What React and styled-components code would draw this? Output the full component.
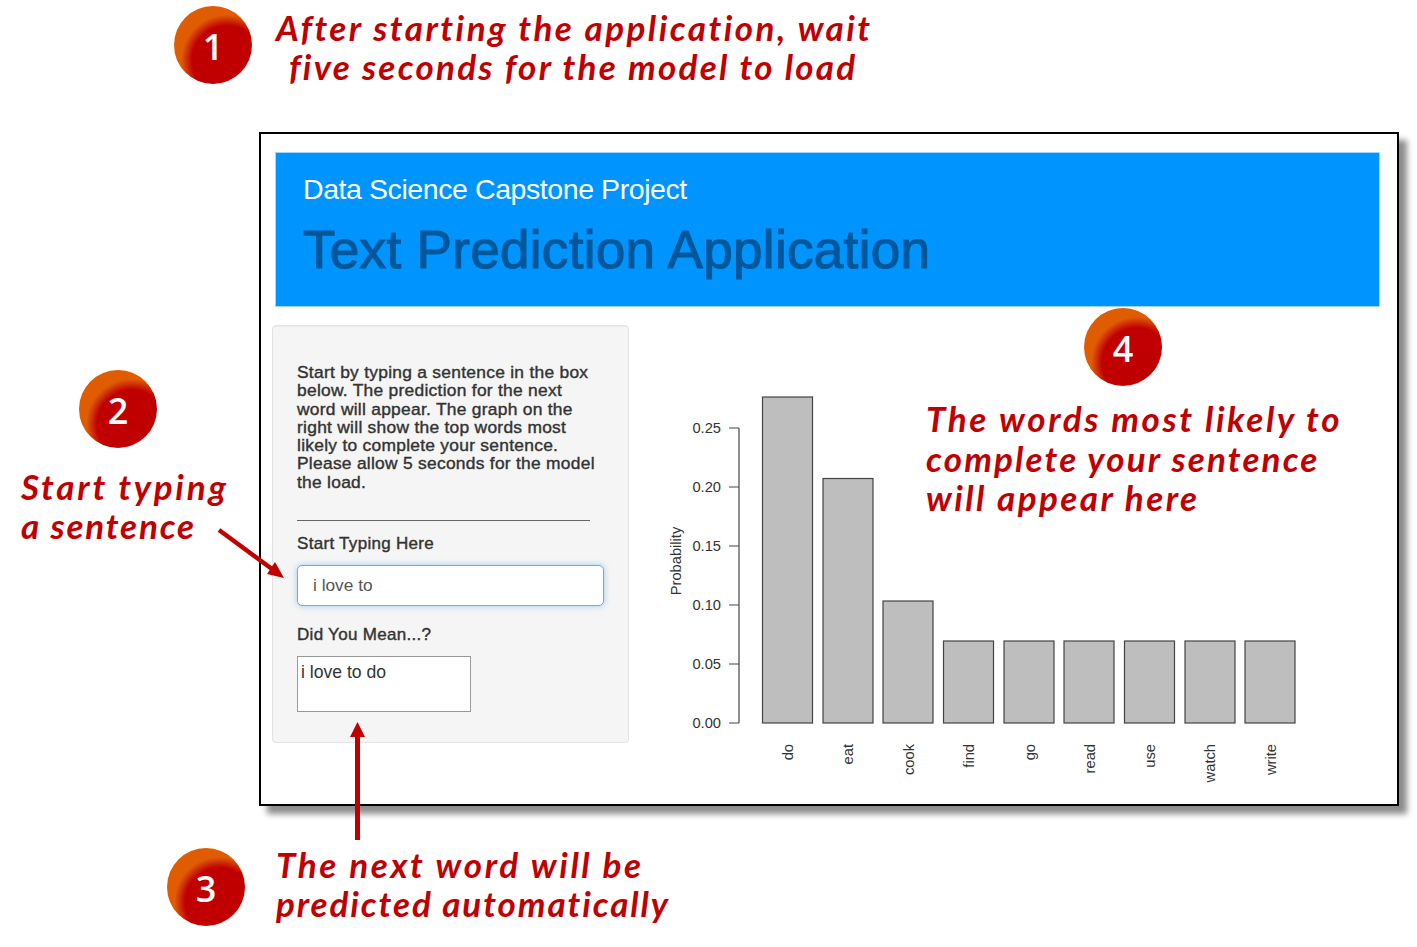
import React from "react";
import styled, { createGlobalStyle } from "styled-components";

const GlobalStyle = createGlobalStyle`
  html, body {
    margin: 0;
    padding: 0;
    background: #fff;
    font-family: "Liberation Sans", Arial, sans-serif;
  }
`;

const Page = styled.div`
  position: relative;
  width: 1417px;
  height: 947px;
  padding: 132px 18px 0 259px;
  box-sizing: border-box;
  overflow: hidden;
`;

const AppWindow = styled.div`
  height: 674px;
  box-sizing: border-box;
  border: 2px solid #000;
  padding: 18px 0 0 11px;
  background: #fff;
  box-shadow: 8px 8px 6px rgba(0, 0, 0, 0.45);
`;

const Banner = styled.header`
  margin: 0 17px 18px 3px;
  height: 155px;
  box-sizing: border-box;
  padding: 20px 27px 0;
  background: #0094ff;
  border: 1px solid #9fd6ff;
`;

const Subtitle = styled.div`
  font-size: 28.5px;
  line-height: 32px;
  letter-spacing: -0.42px;
  color: #fff;
`;

const Title = styled.h1`
  margin: 16px 0 0;
  font-size: 53px;
  line-height: 58px;
  font-weight: 400;
  letter-spacing: 0.32px;
  color: #00589b;
  -webkit-text-stroke: 1.2px #00589b;
`;

const Content = styled.div`
  display: flex;
  align-items: flex-start;
`;

const SidePanel = styled.aside`
  flex: 0 0 357px;
  height: 418px;
  box-sizing: border-box;
  padding: 37px 24px 0;
  background: #f5f5f5;
  border: 1px solid #e3e3e3;
  border-radius: 4px;
  box-shadow: inset 0 1px 1px rgba(0, 0, 0, 0.05);
  color: #333;
`;

const Intro = styled.p`
  margin: 0;
  font-size: 17.4px;
  line-height: 18.3px;
  letter-spacing: 0.27px;
  -webkit-text-stroke: 0.4px #333;
`;

const Rule = styled.hr`
  width: 293px;
  margin: 29px 0 13px;
  border: 0;
  border-top: 1px solid #666;
`;

const FieldLabel = styled.div`
  font-size: 17px;
  line-height: 20px;
  letter-spacing: 0.3px;
  margin-bottom: 11px;
  -webkit-text-stroke: 0.4px #333;
`;

const TextInput = styled.div`
  width: 307px;
  height: 41px;
  box-sizing: border-box;
  padding: 0 15px;
  margin-bottom: 19px;
  display: flex;
  align-items: center;
  font-size: 17.3px;
  color: #555;
  background: #fff;
  border: 1.5px solid #66afe9;
  border-radius: 5px;
  box-shadow: 0 0 6px rgba(102, 175, 233, 0.6);
`;

const Prediction = styled.div`
  width: 174px;
  height: 56px;
  box-sizing: border-box;
  padding: 5px 3px;
  font-size: 17.6px;
  line-height: 20px;
  color: #333;
  background: #fff;
  border: 1px solid #999;
`;

const ChartSvg = styled.svg`
  display: block;
  flex: 0 0 768px;
  width: 768px;
  height: 478px;
  font-family: "Liberation Sans", Arial, sans-serif;
  font-size: 14.7px;
  fill: #333;
`;

const Note = styled.div`
  position: absolute;
  left: ${(props) => props.$x}px;
  top: ${(props) => props.$y}px;
  font-family: "Lato", "Open Sans", sans-serif;
  font-style: italic;
  font-weight: 700;
  font-size: 35px;
  line-height: ${(props) => props.$lh || 39}px;
  color: #c00000;
  white-space: nowrap;
`;

const NoteLine = styled.div`
  letter-spacing: ${(props) => props.$spacing}px;
  padding-left: ${(props) => props.$indent || 0}px;
`;

const Badge = styled.div`
  position: absolute;
  left: ${(props) => props.$x}px;
  top: ${(props) => props.$y}px;
  width: 78px;
  height: 78px;
  box-sizing: border-box;
  padding-top: 3px;
  display: flex;
  align-items: center;
  justify-content: center;
  border-radius: 50%;
  background: radial-gradient(circle at 68% 70%, #c00000 0, #c00000 46%, #df5c00 60%);
  color: #fff;
  font-family: "Open Sans", "Liberation Sans", sans-serif;
  font-size: 36px;
  font-weight: 600;
`;

const ArrowLayer = styled.svg`
  position: absolute;
  left: 0;
  top: 0;
  width: 1417px;
  height: 947px;
  pointer-events: none;
`;

const ticks = [
  { y: 723, label: "0.00" },
  { y: 664, label: "0.05" },
  { y: 605, label: "0.10" },
  { y: 546, label: "0.15" },
  { y: 487, label: "0.20" },
  { y: 428, label: "0.25" },
];

const bars = [
  { x: 762.5, w: 50, top: 397, word: "do", base: 793 },
  { x: 823, w: 50, top: 478.5, word: "eat", base: 853 },
  { x: 883, w: 50, top: 601, word: "cook", base: 913.5 },
  { x: 943.5, w: 50, top: 641, word: "find", base: 973.5 },
  { x: 1004, w: 50, top: 641, word: "go", base: 1034.5 },
  { x: 1064, w: 50, top: 641, word: "read", base: 1094.5 },
  { x: 1124.5, w: 50, top: 641, word: "use", base: 1154.5 },
  { x: 1185, w: 50, top: 641, word: "watch", base: 1215 },
  { x: 1245, w: 50, top: 641, word: "write", base: 1275.5 },
];

function BarChart() {
  return (
    <ChartSvg viewBox="629 325 768 478">
      <line x1="739" y1="428" x2="739" y2="723" stroke="#444" strokeWidth="1.2" />
      {ticks.map((t) => (
        <g key={t.label}>
          <line x1="729" y1={t.y} x2="739" y2={t.y} stroke="#444" strokeWidth="1" />
          <text x="721" y={t.y + 5} textAnchor="end">{t.label}</text>
        </g>
      ))}
      <text transform="translate(681 561) rotate(-90)" textAnchor="middle">Probability</text>
      {bars.map((b) => (
        <g key={b.word}>
          <rect x={b.x} y={b.top} width={b.w} height={723 - b.top} fill="#bebebe" stroke="#444" strokeWidth="1.2" />
          <text transform={`translate(${b.base} 744) rotate(-90)`} textAnchor="end">{b.word}</text>
        </g>
      ))}
    </ChartSvg>
  );
}

export default function App() {
  return (
    <>
      <GlobalStyle />
      <Page>
        <AppWindow>
          <Banner>
            <Subtitle>Data Science Capstone Project</Subtitle>
            <Title>Text Prediction Application</Title>
          </Banner>
          <Content>
            <SidePanel>
              <Intro>
                Start by typing a sentence in the box<br />
                below. The prediction for the next<br />
                word will appear. The graph on the<br />
                right will show the top words most<br />
                likely to complete your sentence.<br />
                Please allow 5 seconds for the model<br />
                the load.
              </Intro>
              <Rule />
              <FieldLabel>Start Typing Here</FieldLabel>
              <TextInput>i love to</TextInput>
              <FieldLabel>Did You Mean...?</FieldLabel>
              <Prediction>i love to do</Prediction>
            </SidePanel>
            <BarChart />
          </Content>
        </AppWindow>

        <ArrowLayer viewBox="0 0 1417 947">
          <line x1="219" y1="530" x2="272" y2="569" stroke="#c00000" strokeWidth="4.5" />
          <polygon points="284,578 267,574 275,562" fill="#c00000" />
          <line x1="357.5" y1="840" x2="357.5" y2="734" stroke="#c00000" strokeWidth="5" />
          <polygon points="357.5,722 350,737 365,737" fill="#c00000" />
        </ArrowLayer>

        <Badge $x={174} $y={6}>1</Badge>
        <Note $x={276} $y={8}>
          <NoteLine $spacing={2.47}>After starting the application, wait</NoteLine>
          <NoteLine $spacing={2.26} $indent={13}>five seconds for the model to load</NoteLine>
        </Note>

        <Badge $x={79} $y={370}>2</Badge>
        <Note $x={21} $y={467}>
          <NoteLine $spacing={2.75}>Start typing</NoteLine>
          <NoteLine $spacing={1.8}>a sentence</NoteLine>
        </Note>

        <Badge $x={167} $y={848}>3</Badge>
        <Note $x={276} $y={845}>
          <NoteLine $spacing={2.6}>The next word will be</NoteLine>
          <NoteLine $spacing={1.9}>predicted automatically</NoteLine>
        </Note>

        <Badge $x={1084} $y={308}>4</Badge>
        <Note $x={926} $y={399} $lh={39.5}>
          <NoteLine $spacing={2.6}>The words most likely to</NoteLine>
          <NoteLine $spacing={2.15}>complete your sentence</NoteLine>
          <NoteLine $spacing={2.45}>will appear here</NoteLine>
        </Note>
      </Page>
    </>
  );
}
